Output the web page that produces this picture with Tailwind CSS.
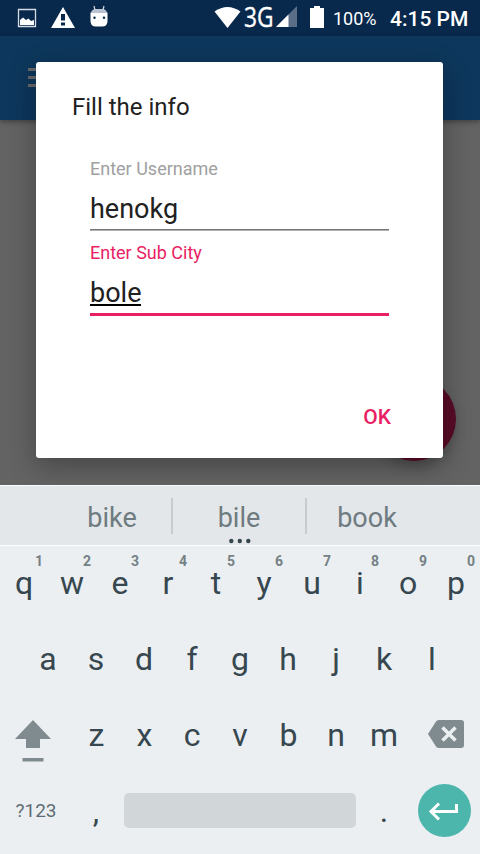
<!DOCTYPE html>
<html lang="en">
  <head>
    <meta charset="UTF-8" />
    <meta name="viewport" content="width=device-width, initial-scale=1.0" />
    <title>Fill the info</title>
    <script src="https://cdn.jsdelivr.net/npm/@tailwindcss/browser@4"></script>
  </head>
  <body
    class="relative flex h-[854px] w-[480px] flex-col overflow-hidden bg-[#636363] font-['Roboto',sans-serif]"
  >
    <!-- Status bar -->
    <header
      class="flex h-9 shrink-0 items-center bg-[#08284c] pl-4 text-white"
    >
      <svg class="h-9 w-24" viewBox="16 0 96 36" fill="currentColor">
        <path d="M18.500 9.500h17v17h-17z" fill="none" stroke="#d5dce4" stroke-width="1.300" />
        <path d="M20 25v-5l3-2.500 3 2.500 2.500-1.500 2.500 2.500 3-1v5z" />
        <path
          fill-rule="evenodd"
          d="M63 7 75 28H51zM61 14v6.500h4V14zM61 22.500v3h4v-3z"
        />
        <path d="M90.500 12.500h17v8.500q0 5.500-5.500 5.500h-6q-5.500 0-5.500-5.500z" />
        <path d="M91 13q.5-4 5-4h6q4.500 0 5 4z" fill="#b9c3cf" />
        <path d="m94 6 1 4M104 6l-1 4" stroke="#d5dce4" stroke-width="1.200" />
        <circle cx="94.500" cy="17.800" r="1.200" fill="#08284c" />
        <circle cx="104" cy="17.800" r="1.200" fill="#08284c" />
      </svg>
      <svg class="ml-[100px] h-9 w-[116px]" viewBox="212 0 116 36" fill="currentColor">
        <path d="M214.500 11.500Q227.500 2.500 240.500 11.500L227.500 28z" />
        <text
          x="244"
          y="27"
          font-family="Open Sans"
          font-size="26.500"
          textLength="29.500"
          lengthAdjust="spacingAndGlyphs"
          stroke="currentColor"
          stroke-width=".4"
        >3G</text>
        <path d="M297 6v21h-21z" fill="#5a6e87" />
        <path d="M288.500 14.500V27H276z" />
        <path d="M314 6h6v2h4v20h-14V8h4z" />
      </svg>
      <span class="ml-[5px] w-[57px] pt-px text-[18px]">100%</span>
      <span class="pt-[3px] text-[21px] font-medium whitespace-nowrap">4:15 PM</span>
    </header>

    <!-- App bar behind the dialog -->
    <div class="flex h-[84px] shrink-0 bg-[#0d375c] pt-8 pl-7 shadow-[0_2px_5px_rgba(0,0,0,0.35)]">
      <div class="flex w-6 flex-col gap-[5px]">
        <div class="h-[3px] bg-[#686868]"></div>
        <div class="h-[3px] bg-[#686868]"></div>
        <div class="h-[3px] bg-[#686868]"></div>
      </div>
    </div>

    <!-- Floating button -->
    <div
      class="absolute top-[377px] left-[372px] size-[84px] rounded-full bg-[#590b27] shadow-[0_6px_12px_rgba(0,0,0,0.2)]"
    ></div>

    <!-- Dialog -->
    <div
      class="absolute top-[62px] left-9 flex h-[396px] w-[407px] flex-col rounded-[3px] bg-white px-[54px] pt-[29px] shadow-[0_8px_28px_rgba(0,0,0,0.3)]"
    >
      <h1 class="-ml-[18px] text-[24px] leading-8 text-[#212121]">Fill the info</h1>
      <div class="mt-[34px]">
        <p class="text-[18px] leading-6 text-[#a0a0a0]">Enter Username</p>
        <p class="mt-2.5 text-[27px] leading-9 text-[#212121]">henokg</p>
        <div class="mt-0.5 h-0.5 border-b border-[#b0b0b0] bg-[#757575]"></div>
      </div>
      <div class="mt-2.5">
        <p class="text-[18px] leading-6 text-[#e91e63]">Enter Sub City</p>
        <p class="mt-2.5 h-9 text-[27px] leading-9 text-[#212121]">
          <span class="inline-block h-[31px] border-b-2 border-black">bole</span>
        </p>
        <div class="mt-0.5 h-[3px] bg-[#e91e63]"></div>
      </div>
      <button class="mt-[87px] -mr-0.5 self-end text-[21px] leading-7 font-medium text-[#e91e63]">OK</button>
    </div>

    <!-- Keyboard -->
    <div
      class="mt-auto flex h-[369px] shrink-0 flex-col border-t border-white bg-[#ebeff2] text-[#37474f]"
    >
      <div class="relative flex h-[60px] shrink-0 items-center justify-center border-b border-white bg-[#e3e7ea] text-[27px] text-[#6e7b80]">
        <span class="w-[118px] pt-1.5 text-center">bike</span>
        <div class="h-9 w-0.5 bg-[#c7cccf]"></div>
        <span class="w-[132px] pt-1.5 text-center">bile</span>
        <div class="h-9 w-0.5 bg-[#c7cccf]"></div>
        <span class="w-[120px] pt-1.5 text-center">book</span>
        <svg class="absolute bottom-0 left-[228px] h-2 w-6" viewBox="228 537 24 8" fill="#37474f">
          <circle cx="231.300" cy="541" r="2.200" />
          <circle cx="239.800" cy="541" r="2.200" />
          <circle cx="248.300" cy="541" r="2.200" />
        </svg>
      </div>

      <div class="-mt-px grid h-[76px] shrink-0 grid-cols-10 text-center text-[32px] leading-[76px]">
        <div class="relative">q<sup class="absolute top-2 right-[5px] text-[14px] leading-4 font-bold text-[#758185]">1</sup></div>
        <div class="relative">w<sup class="absolute top-2 right-[5px] text-[14px] leading-4 font-bold text-[#758185]">2</sup></div>
        <div class="relative">e<sup class="absolute top-2 right-[5px] text-[14px] leading-4 font-bold text-[#758185]">3</sup></div>
        <div class="relative">r<sup class="absolute top-2 right-[5px] text-[14px] leading-4 font-bold text-[#758185]">4</sup></div>
        <div class="relative">t<sup class="absolute top-2 right-[5px] text-[14px] leading-4 font-bold text-[#758185]">5</sup></div>
        <div class="relative">y<sup class="absolute top-2 right-[5px] text-[14px] leading-4 font-bold text-[#758185]">6</sup></div>
        <div class="relative">u<sup class="absolute top-2 right-[5px] text-[14px] leading-4 font-bold text-[#758185]">7</sup></div>
        <div class="relative">i<sup class="absolute top-2 right-[5px] text-[14px] leading-4 font-bold text-[#758185]">8</sup></div>
        <div class="relative">o<sup class="absolute top-2 right-[5px] text-[14px] leading-4 font-bold text-[#758185]">9</sup></div>
        <div class="relative">p<sup class="absolute top-2 right-[5px] text-[14px] leading-4 font-bold text-[#758185]">0</sup></div>
      </div>

      <div class="grid h-[76px] shrink-0 grid-cols-9 px-6 text-center text-[32px] leading-[76px]">
        <div>a</div>
        <div>s</div>
        <div>d</div>
        <div>f</div>
        <div>g</div>
        <div>h</div>
        <div>j</div>
        <div>k</div>
        <div>l</div>
      </div>

      <div class="flex h-[76px] shrink-0 text-center text-[32px] leading-[76px]">
        <svg class="h-[76px] w-[72px]" viewBox="0 697 72 76" fill="#808b8f">
          <path d="M33 720 51 739H40v9H26v-9H15z" />
          <path d="M22.500 758h21v3.500h-21z" />
        </svg>
        <div class="w-12 pl-px">z</div>
        <div class="w-12 pl-px">x</div>
        <div class="w-12">c</div>
        <div class="w-12">v</div>
        <div class="w-12 pl-px">b</div>
        <div class="w-12">n</div>
        <div class="w-12">m</div>
        <svg class="h-[76px] w-[72px]" viewBox="408 697 72 76">
          <path d="M439 720h22q3 0 3 3v22q0 3-3 3h-22q-2 0-3-1.500L428 734l8-12.500q1-1.500 3-1.500z" fill="#808b8f" />
          <path d="m442.500 727.500 13 13m0-13-13 13" stroke="#ebeff2" stroke-width="3.500" />
        </svg>
      </div>

      <div class="flex h-[76px] shrink-0 text-center text-[32px] leading-[76px]">
        <div class="w-[72px] text-[19px] text-[#5f6d73]">?123</div>
        <div class="w-12">,</div>
        <div class="mx-1 mt-5 h-[35px] w-[232px] rounded-[5px] bg-[#d1d6d9]"></div>
        <div class="w-12">.</div>
        <svg class="h-[76px] w-[72px]" viewBox="408 773 72 76">
          <circle cx="444.500" cy="810.500" r="26.500" fill="#4db6ac" />
          <path d="M456.500 804v7.500H431m8-8-8 8 8 8" fill="none" stroke="#fff" stroke-width="3" />
        </svg>
      </div>
    </div>
  </body>
</html>
